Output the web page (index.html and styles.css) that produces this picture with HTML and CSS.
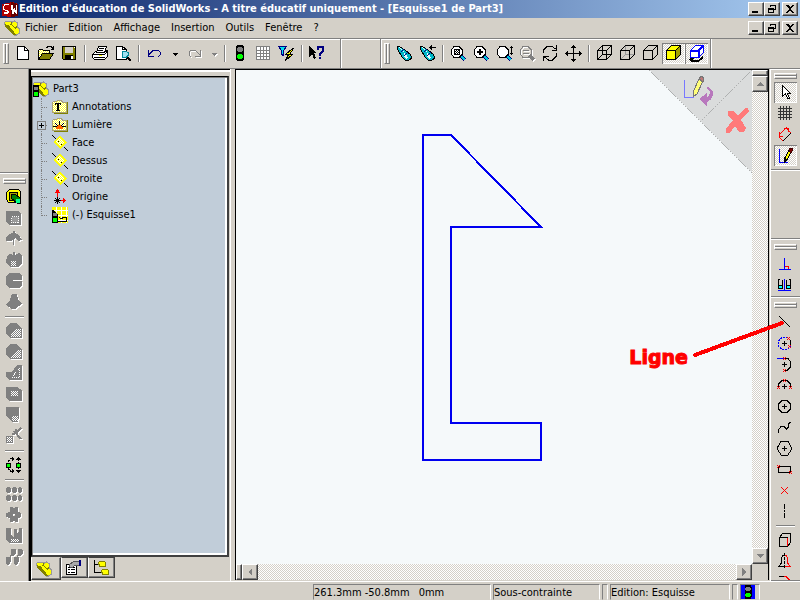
FILE: index.html
```html
<!DOCTYPE html>
<html lang="fr">
<head>
<meta charset="utf-8">
<title>Edition d'éducation de SolidWorks</title>
<link rel="stylesheet" href="styles.css">
</head>
<body>
<svg class="defs" aria-hidden="true">
<defs>
<pattern id="dots-y" width="2" height="2" patternUnits="userSpaceOnUse"><rect width="2" height="2" fill="#ffff30"/><rect width="1" height="1" fill="#fff"/><rect x="1" y="1" width="1" height="1" fill="#fff"/></pattern>
<pattern id="dots-g" width="2" height="2" patternUnits="userSpaceOnUse"><rect width="2" height="2" fill="#808080"/><rect width="1" height="1" fill="#fff"/><rect x="1" y="1" width="1" height="1" fill="#fff"/></pattern>
<symbol id="part" viewBox="0 0 16 16"><path d="M1 5V3l2-2h4l1 1 1-1h2l3 2v4l2 1v5l-3 2h-3L1 7z" fill="#808000"/><path d="M1 2l2-1h3l1 2-2 2H2zM8 2l2-1 3 2v3l-3 1-2-2zM10 9l3-1 3 2v3l-3 2-3-2zM4 4l4 1 3 4v4L6 7z" fill="#ffff00"/><path d="M.5 5V2.500l2-1.500h4l2 1 2-1 3 2v4l2 2v4l-3 2h-3" fill="none" stroke="#999"/></symbol>
<symbol id="light" viewBox="0 0 16 16"><path d="M5 0h6l1 2v12l-1 2H5l-1-2V2z" fill="#000"/><path d="M6 2h4v1h1v3h-1v1H6V6H5V3h1z" fill="#808080"/><path d="M6 9h4v1h1v3h-1v1H6v-1H5v-3h1z" fill="#0f0"/></symbol>
<symbol id="drop" viewBox="0 0 16 16"><path d="M6 8h5v1h-1v1H9v1H8v-1H7V9H6z" fill="currentColor"/></symbol>
<symbol id="lens" viewBox="0 0 20 20"><path d="M13 13l4 4" stroke="#000080" stroke-width="4"/><path d="M13 13l4 4" stroke="#00c8d8" stroke-width="2"/><path d="M6 3.500h5l3.500 3.500v4L11 14.500H6L3.500 11V7z" fill="#fff" stroke="#000"/></symbol>
<symbol id="scope" viewBox="0 0 20 20"><path d="M3.500 3.500h2l6 4 5 4 1 3-1 2-3 1h-2l-3-3-5-8z" fill="#00b8c8" stroke="#000"/><path d="M4 4h1l5 4-1 1zM10 10l2 1 2 4-2 1-2-3z" fill="#e8ffff"/><path d="M7 9l3-3M10 13l4-4" stroke="#000080"/></symbol>
<symbol id="cube" viewBox="0 0 20 20"><path d="M3.500 7.500h9v9h-9zM3.500 7.500l5-5h9l-5 5M17.500 2.500v9l-5 5" fill="none" stroke="currentColor"/></symbol>
<symbol id="plane" viewBox="0 0 16 16"><path d="M8 1l7 6-7 7-7-7z" fill="#ff0"/><path d="M8 3l4 4-4 5-5-5z" fill="url(#dots-y)"/><path d="M0 0l4 4M12 12l4 4M6 6l1 1M9 9l1 1" stroke="#000"/></symbol>
<symbol id="folder" viewBox="0 0 16 16"><path d="M.5 13.500v-10l1-1h3l1-1h4l1 2h4v10z" fill="url(#dots-y)" stroke="#aaa27a"/><path d="M15.500 3v11.500H2" fill="none" stroke="#808000"/></symbol>
<symbol id="min" viewBox="0 0 12 10"><path d="M2 7h6v2H2z"/></symbol>
<symbol id="restore" viewBox="0 0 12 10"><path d="M4.500 3V1.500h5v4H8M4 1h6M2.500 4.500h5v4h-5zM2 4.500h6" fill="none" stroke="#000"/><path d="M4 1h6v1H4zM2 4h6v2H2z"/></symbol>
<symbol id="close" viewBox="0 0 12 10"><path d="M2 1h2l2 2 2-2h2L7 5l3 4H8L6 6 4 9H2l3-4z"/></symbol>
</defs>
</svg>
<div class="app">
<header class="title-bar">
<svg class="i16" aria-hidden="true" viewBox="0 0 16 16"><path d="M0 3l10-2 6 2v12l-6 1-10-1z" fill="#b00000"/><path d="M9 1l7 2v12l-7 1z" fill="#600"/><path d="M7 4H3v1H2v3h1v1h3v1h1v2H6v1H2v-2h3v-1H3V9H1V5h1V3h5zM9 4h2v6l1-3h1l1 3V4h1v9h-1l-1-3-1 3h-2z" fill="#fff"/></svg>
<h1>Edition d'éducation de SolidWorks - A titre éducatif uniquement - [Esquisse1 de Part3]</h1>
<div class="window-buttons"><button aria-label="Réduire"><svg><use href="#min"/></svg></button><button aria-label="Restaurer"><svg><use href="#restore"/></svg></button><button aria-label="Fermer"><svg><use href="#close"/></svg></button></div>
</header>
<nav class="menu-bar">
<svg class="i16" aria-hidden="true"><use href="#part"/></svg>
<button>Fichier</button><button>Edition</button><button>Affichage</button><button>Insertion</button><button>Outils</button><button>Fenêtre</button><button>?</button>
<div class="window-buttons"><button aria-label="Réduire le document"><svg><use href="#min"/></svg></button><button aria-label="Restaurer le document"><svg><use href="#restore"/></svg></button><button aria-label="Fermer le document"><svg><use href="#close"/></svg></button></div>
</nav>

<div class="toolbar">
<div class="band band-main"><i class="grip"></i>
<button class="tool" aria-label="Nouveau"><svg viewBox="0 0 20 20"><path d="M4.500 3.500h7l4 4v9h-11z" fill="#fff" stroke="#000"/><path d="M11.500 3.500v4h4" fill="none" stroke="#000"/></svg></button>
<button class="tool" aria-label="Ouvrir"><svg viewBox="0 0 20 20"><path d="M2.500 16.500v-9l1-1h3l1 1h6v3" fill="url(#dots-y)" stroke="#000"/><path d="M2.500 16.500l4-6h11l-4 6z" fill="#808000" stroke="#000"/><path d="M10 4.500h1l1-1h3l2 2M17.500 3v4M15 6.500h3" fill="none" stroke="#000"/></svg></button>
<button class="tool" aria-label="Enregistrer"><svg viewBox="0 0 20 20"><path d="M3.500 3.500h13v13h-12l-1-1z" fill="#808000" stroke="#000"/><path d="M6 4h8v6H6z" fill="#d4d0c8"/><path d="M6 12h8v5H6z" fill="#000"/><path d="M12 13h2v3h-2zM15 4h1v1h-1z" fill="#fff"/></svg></button>
<i class="sep"></i>
<button class="tool" aria-label="Imprimer"><svg viewBox="0 0 20 20"><path d="M2.500 11.500l3-3h10l2-1v6l-3 3h-10l-2-2z" fill="#fff" stroke="#000"/><path d="M6.500 9.500l2-6h8l-2 6z" fill="#fff" stroke="#000"/><path d="M9 5.500h5M8 7.500h5M3 11.500h12M4 14.500h11M15 11l2-2" stroke="#000"/><path d="M9 12h3v1H9z" fill="#ff0"/></svg></button>
<button class="tool" aria-label="Aperçu"><svg viewBox="0 0 20 20"><path d="M3.500 3.500h6l4 3v10h-10z" fill="#fff" stroke="#000"/><path d="M9.500 3.500v3h4" fill="none" stroke="#000"/><path d="M14 14l4 4" stroke="#000" stroke-width="2"/><path d="M10 8.500h3l2 1v3l-2 2h-3l-1-2v-3z" fill="#a0e0f0" stroke="#00889a"/></svg></button>
<i class="sep"></i>
<button class="tool" aria-label="Annuler"><svg viewBox="0 0 20 20" fill="none" stroke="#000080"><path d="M4.500 7v6H10M5 12l5-5h4l2 2v3l-2 2M5 11l4-4"/></svg></button>
<button class="tool tool-drop" aria-label="Liste d'annulation"><svg class="i16"><use href="#drop"/></svg></button>
<button class="tool off" aria-label="Rétablir"><svg viewBox="0 0 20 20" fill="none" stroke="#808080"><path d="M17.500 7v6H12M17 12l-5-5H8L6 9v3l2 2"/></svg></button>
<button class="tool tool-drop off" aria-label="Liste de rétablissement"><svg class="i16"><use href="#drop"/></svg></button>
<i class="sep"></i>
<button class="tool tool-small" aria-label="Reconstruire"><svg class="i16"><use href="#light"/></svg></button>
<button class="tool" aria-label="Grille"><svg viewBox="0 0 20 20"><path d="M3 3h14v14H3z" fill="#fff"/><path d="M3.500 3v14M7.500 3v14M10.500 3v14M13.500 3v14M16.500 3v14M3 3.500h14M3 7.500h14M3 10.500h14M3 13.500h14M3 16.500h14" stroke="#808080"/></svg></button>
<button class="tool" aria-label="Filtres de sélection"><svg viewBox="0 0 20 20"><path d="M2.500 3.500h8l-3 4v5l-2-1v-4z" fill="#00e0f0" stroke="#000080"/><path d="M16.500 5.500l-7 6h3l-3 6 7-6h-3l4-6z" fill="#ff0" stroke="#000"/></svg></button>
<i class="sep"></i>
<button class="tool" aria-label="Aide contextuelle"><svg viewBox="0 0 20 20"><path d="M2 3l8 7H7l2 5-2 1-2-5-3 3z" fill="#000"/><path d="M11 7V4h5v4l-3 3v2M13 14v2" fill="none" stroke="#000080" stroke-width="2"/></svg></button>
</div>
<div class="band band-empty"></div>
<div class="band band-view"><i class="grip"></i>
<button class="tool" aria-label="Orientation de vue"><svg><use href="#scope"/></svg></button>
<button class="tool" aria-label="Vue précédente"><svg viewBox="0 0 20 20"><use href="#scope"/><path d="M12 4.500h7M14.500 2v5M13.500 3v3" stroke="#000"/></svg></button>
<i class="sep"></i>
<button class="tool" aria-label="Zoom au mieux"><svg viewBox="0 0 20 20"><use href="#lens"/><path d="M6 6h6v6H6z" fill="#000"/><path d="M7 7h1v1H7zM9 7h1v1H9zM8 8h1v1H8zM10 8h1v1h-1zM7 9h1v1H7zM9 9h1v1H9zM8 10h1v1H8zM10 10h1v1h-1z" fill="#fff"/></svg></button>
<button class="tool" aria-label="Zoom fenêtre"><svg viewBox="0 0 20 20"><use href="#lens"/><path d="M6 9h6M9 6v6" stroke="#000" stroke-width="2"/></svg></button>
<button class="tool" aria-label="Zoom avant/arrière"><svg viewBox="0 0 20 20"><use href="#lens"/><path d="M17.500 3v9M16 4.500h3M16 10.500h3" stroke="#000"/></svg></button>
<button class="tool off" aria-label="Zoom sur la sélection"><svg viewBox="0 0 20 20"><path d="M6 3.500h5l3.500 3.500v4L11 14.500H6L3.500 11V7zM6 7.500h6M6 10.500h6" fill="none" stroke="#808080"/><path d="M13 13l4 4" stroke="#808080" stroke-width="3"/></svg></button>
<button class="tool" aria-label="Rotation"><svg viewBox="0 0 20 20" fill="none" stroke="#000"><path d="M3.500 10V7l4-4h4l4 3M16.500 2v5h-5M16.500 10v3l-4 4h-4l-4-3M3.500 18v-5h5"/></svg></button>
<button class="tool" aria-label="Translation"><svg viewBox="0 0 20 20"><path d="M10.500 3v15M3 10.500h15" stroke="#000"/><path d="M10 2h1l2 3H8zM10 19h1l2-3H8zM2 10v1l3 2V8zM19 10v1l-3 2V8z"/></svg></button>
<i class="sep"></i>
<button class="tool" aria-label="Image filaire"><svg viewBox="0 0 20 20"><use href="#cube"/><path d="M8.500 3v8.500H17M8 12l-4 4" fill="none" stroke="#000"/></svg></button>
<button class="tool" aria-label="Lignes cachées en gris"><svg viewBox="0 0 20 20"><path d="M8.500 3v8.500H17M8 12l-4 4" fill="none" stroke="#999"/><use href="#cube"/></svg></button>
<button class="tool" aria-label="Lignes cachées supprimées"><svg><use href="#cube"/></svg></button>
<button class="tool pressed" aria-label="Image ombrée"><svg viewBox="0 0 20 20"><path d="M3 7l5-5h9v10l-5 5H3z" fill="#ff0"/><path d="M12 8l5-5v9l-5 5z" fill="#a0a000"/><use href="#cube"/></svg></button>
<button class="tool pressed" aria-label="Ombres"><svg viewBox="0 0 20 20"><path d="M4 15h4l-2 2h6l5-4v3l-5 3H6l-3-2z" fill="#000"/><path d="M4.500 7.500l5-5h8v7l-5 5h-8z" fill="#fff" stroke="#00f"/><path d="M4.500 7.500h8v7M12.500 7.500l5-5" fill="none" stroke="#00f" stroke-width="2"/></svg></button>
</div>
</div>

<main class="workspace">
<aside class="features">
<div class="dock-blank"></div>
<div class="dock">
<i class="grip-h"></i>
<button class="side" aria-label="Base/Bossage"><svg viewBox="0 0 20 20"><path d="M2.500 5.500l3-3h9l2 2v9l-3 2h-9l-2-3z" fill="#ff0" stroke="#000"/><path d="M5.500 5.500h8v8h-8z" fill="#aaa200" stroke="#000"/><path d="M7 7h4l5 4v5h-3L7 11z" fill="#008000" stroke="#000"/><path d="M12 12h4v4h-4z" fill="#0f8"/></svg></button>
<button class="side off" aria-label="Enlèvement de matière"><svg viewBox="0 0 20 20" fill="#808080"><path d="M2 3h12l3 3v11H6l-4-3z"/><path d="M7.500 8.500h7v6h-7z" fill="#999" stroke="#fff" stroke-dasharray="1 1"/></svg></button>
<button class="side off" aria-label="Révolution"><svg viewBox="0 0 20 20" fill="#808080"><path d="M2 9l3-4 4-1V2h2v2l4 2 3 5-4 1-3-3-1 1v6H9v-5l-3 1H2z"/></svg></button>
<button class="side off" aria-label="Enlèvement par révolution"><svg viewBox="0 0 20 20" fill="#808080"><path d="M3 6l3-2 3 1V2h2v3l4-2 3 3v7l-4 4H6l-4-4z"/><path d="M7 11h5v5H7z" fill="url(#dots-g)"/></svg></button>
<button class="side off" aria-label="Balayage"><svg viewBox="0 0 20 20" fill="#808080"><path d="M5 2h10l3 3v4H9v1h9v4l-3 3H5l-3-4V5z"/></svg></button>
<button class="side off" aria-label="Lissage"><svg viewBox="0 0 20 20" fill="#808080"><path d="M8 2h5l1 6 4 4-7 5H8l-6-4 4-5z"/></svg></button>
<i class="sep-h"></i>
<button class="side off" aria-label="Congé"><svg viewBox="0 0 20 20" fill="#808080"><path d="M2 6l4-4h6l6 5v10H6l-4-4z"/><path d="M7 16V13l4-5h6v8z" fill="url(#dots-g)"/></svg></button>
<button class="side off" aria-label="Chanfrein"><svg viewBox="0 0 20 20" fill="#808080"><path d="M2 6l4-4h6l6 5v10H6l-4-4z"/><path d="M7 16l6-8h4v8z" fill="url(#dots-g)"/></svg></button>
<button class="side off" aria-label="Nervure"><svg viewBox="0 0 20 20" fill="#808080"><path d="M2 9h6l5-7h5v15H5l-3-3z"/><path d="M7.500 14.500l8-9v9z" fill="none" stroke="#fff" stroke-dasharray="1 1"/></svg></button>
<button class="side off" aria-label="Coque"><svg viewBox="0 0 20 20" fill="#808080"><path d="M2 3h11l5 3v11H5l-3-3z"/><path d="M7 7h7v5H7z" fill="url(#dots-g)"/></svg></button>
<button class="side off" aria-label="Dépouille"><svg viewBox="0 0 20 20" fill="#808080"><path d="M2 2h13v9l-1 6H8L2 11z"/><path d="M8 11h6v5H8z" fill="url(#dots-g)"/></svg></button>
<button class="side off" aria-label="Assistance pour le perçage"><svg viewBox="0 0 20 20"><path d="M2.500 10.500h6v6h-6z" fill="url(#dots-g)" stroke="#808080"/><path d="M10 5l7 8M17 2l-6 6M12 3v3M8 8h3" stroke="#808080" stroke-width="2"/></svg></button>
<i class="sep-h"></i>
<button class="side" aria-label="Répétition"><svg viewBox="0 0 20 20"><path d="M9 3.500H7L4.500 6v8L7 16.500h2M14.500 3v14" fill="none" stroke="#000" stroke-dasharray="3 1"/><path d="M8 2l3 2-3 2zM8 14l3 2-3 2zM14 2h1l2 3h-5zM14 18h1l2-3h-5z"/><path d="M2.500 8.500h4v4h-4zM12.500 8.500h4v4h-4z" fill="#0f0" stroke="#000"/></svg></button>
<i class="sep-h"></i>
<button class="side off" aria-label="Répétition linéaire"><svg viewBox="0 0 20 20" fill="#808080"><path d="M3 3h3v1h1v4H6v1H3V8H2V4h1zM9 3h3v1h1v4h-1v1H9V8H8V4h1zM15 3h2v1h1v4h-1v1h-2V8h-1V4h1zM3 11h3v1h1v4H6v1H3v-1H2v-4h1zM9 11h3v1h1v4h-1v1H9v-1H8v-4h1zM15 11h2v1h1v4h-1v1h-2v-1h-1v-4h1z"/></svg></button>
<button class="side off" aria-label="Répétition circulaire"><svg viewBox="0 0 20 20" fill="#808080"><path d="M6 2h3l1 2 1-2h3v5l3 1v4l-3 1v4h-3l-1-2-1 2H6v-4l-4-1V8l4-1zM9 9v2h2V9z"/></svg></button>
<button class="side off" aria-label="Symétrie"><svg viewBox="0 0 20 20" fill="#808080"><path d="M2 2h5v7l3 2V3h3v4l2-1V2h3v15H6l-4-3z"/><path d="M7 13h8v3H7z" fill="url(#dots-g)"/></svg></button>
<button class="side off" aria-label="Répétition pilotée"><svg viewBox="0 0 20 20" fill="#808080"><path d="M8 2h3v5l-1 1H8L7 7V3zM15 2h2l1 1v4l-1 1h-2l-1-1V3zM3 10h3v5l-1 2H3l-1-2v-4zM11 10h3v5l-1 2h-2l-1-2v-4zM6 10l2-3M13 10l2-3" stroke="#808080"/></svg></button>
</div>
</aside>

<section class="manager">
<div class="tree">
<div class="node"><svg class="i16" viewBox="0 0 16 16"><use href="#part"/><path d="M0 4h6v12H0z"/><path d="M1 6h4v3H1z" fill="#808080"/><path d="M1 11h4v4H1z" fill="#0f0"/></svg>Part3</div>
<ul>
<li class="node"><svg class="i16" viewBox="0 0 16 16"><use href="#folder"/><path d="M3 4h6v2H8V5H7v6h1v1H4v-1h1V5H4v1H3z"/></svg>Annotations</li>
<li class="node"><button class="expander" aria-label="Développer Lumière"></button><svg class="i16" viewBox="0 0 16 16"><use href="#folder"/><path d="M4 12V9h2V8h3v1h2v3z" fill="#f60"/><path d="M3 6l3 3M7.500 4v4M12 6L9 9M1 9.500h4M10 9.500h4" stroke="#000"/></svg>Lumière</li>
<li class="node"><svg class="i16"><use href="#plane"/></svg>Face</li>
<li class="node"><svg class="i16"><use href="#plane"/></svg>Dessus</li>
<li class="node"><svg class="i16"><use href="#plane"/></svg>Droite</li>
<li class="node"><svg class="i16" viewBox="0 0 16 16"><path d="M5.500 11V2M6 11.500h7" stroke="red"/><path d="M3 4h5L6 0H5zM11 9v5l3-2v-1z" fill="red"/><path d="M3 9l5 5M8 9l-5 5M5.500 8v7M2 11.500h7" stroke="#000"/></svg>Origine</li>
<li class="node"><svg class="i16" viewBox="0 0 16 16"><path d="M0 0h16v16H0z" fill="#ff0"/><path d="M4.500 0v16M9.500 0v16M14.500 0v16M0 3.500h16M0 8.500h16M0 13.500h16" stroke="#fff"/><path d="M0 3h1l5 5v8H0z"/><path d="M1 6h4v3H1z" fill="#808080"/><path d="M1 11h4v4H1z" fill="#0f0"/><path d="M6 14.500h8.500V10H12l-3 2-2-2" fill="none" stroke="#000"/></svg>(-) Esquisse1</li>
</ul>
</div>
<div class="tabs">
<button class="tab current" aria-label="Arbre de création"><svg class="i16"><use href="#part"/></svg></button>
<button class="tab" aria-label="Propriétés"><svg class="i16" viewBox="0 0 16 16"><path d="M.5 4.500h10v10H.5z" fill="#fff" stroke="#000"/><path d="M2 7.500h2M5 7.500h4M2 9.500h2M5 9.500h4M2 12.500h2M5 12.500h4" stroke="#000"/><path d="M3 5l5-4h5v4H9L6 8 4 7z" fill="#aaa" stroke="#555"/><path d="M13 0h2v6h-2z" fill="#000080"/></svg></button>
<button class="tab" aria-label="Configurations"><svg class="i16" viewBox="0 0 16 16"><path d="M1.500 0v12.500H9M1 4.500h5" fill="none" stroke="#000"/><path d="M5.500 2.500l1-1h5l1 1v4h-6zM8.500 10.500l1-1h5l1 1v4h-6z" fill="#ff0" stroke="#808000"/></svg></button>
</div>
</section>

<section class="viewport">
<div class="canvas">
<svg class="sketch" viewBox="0 0 310 396" role="img" aria-label="Profil de l'esquisse"><path d="M187 65h28l90 92h-90v196h90v37H187z" fill="none" stroke="#0000f0" stroke-width="2"/></svg>
<svg class="corner" viewBox="0 0 104 104" role="img" aria-label="Quitter ou annuler l'esquisse"><path d="M1 0h103v103z" fill="#dadcdc"/><path d="M1 0l103 103M104 0L53 51" stroke="#aeb0b0" stroke-dasharray="2 1"/><path d="M36.500 10v17H46" fill="none" stroke="#7878ff"/><path d="M51 9l4 2-6 13-4 3v-5z" fill="#ffff78" stroke="#777"/><path d="M51 9l2-3 3 2-1 4z" fill="#bd7878" stroke="#777"/><path d="M59 17c7 1 9 11 0 15v4l-8-7 8-6v4c4-2 4-6 0-9z" fill="#b878bd"/><path d="M80 44v-3h5l5 5 7-8h3l1 3-8 9 5 8-2 4h-5l-4-6-5 7h-4v-4l7-9-5-4z" fill="#ff7a7a"/></svg>
</div>
<div class="scroll-v"><i class="split"></i><button aria-label="Défiler vers le haut"><svg viewBox="0 0 10 10"><path d="M1 7h8L5 3z" fill="#808080"/></svg></button><span></span><button aria-label="Défiler vers le bas"><svg viewBox="0 0 10 10"><path d="M1 3h8L5 7z" fill="#808080"/></svg></button></div>
<div class="scroll-h"><i class="split"></i><button aria-label="Défiler vers la gauche"><svg viewBox="0 0 10 10"><path d="M7 1v8L3 5z" fill="#808080"/></svg></button><span></span><button aria-label="Défiler vers la droite"><svg viewBox="0 0 10 10"><path d="M3 1v8l4-4z" fill="#808080"/></svg></button></div>
</section>

<aside class="sketch-tools">
<div class="dock dock-select"><i class="grip-h"></i>
<button class="side pressed" aria-label="Sélectionner"><svg viewBox="0 0 20 20"><path d="M7.500 3.500v11l3-3 2 5h2l-2-5h3z" fill="#fff" stroke="#000"/></svg></button>
<button class="side" aria-label="Grille"><svg viewBox="0 0 20 20" stroke="#333"><path d="M5.500 3v14M8.500 3v14M11.500 3v14M14.500 3v14M3 5.500h14M3 8.500h14M3 11.500h14M3 14.500h14"/></svg></button>
<button class="side" aria-label="Cotation"><svg viewBox="0 0 20 20" fill="none"><path d="M4 11l8-8M4 8v4h4M9 4h4v4" stroke="red"/><path d="M4 13l4 4M12 5l4 4" stroke="red"/><path d="M8 17l8-8" stroke="#000"/></svg></button>
<button class="side pressed" aria-label="Esquisse"><svg viewBox="0 0 20 20"><path d="M4.500 4v13h8" fill="none" stroke="#00f"/><path d="M14.500 4.500l2 1-4 9-3 2v-3z" fill="#ff0" stroke="#000"/><path d="M14 6l1-3h2v3l-1 2z" fill="#800000" stroke="#400"/><path d="M10 13l2 2-3 3z"/></svg></button>
</div>
<div class="dock-blank"></div>
<div class="dock dock-relations"><i class="grip-h"></i>
<button class="side" aria-label="Ajouter des relations"><svg viewBox="0 0 20 20"><path d="M9.500 4v11M4 15.500h12" stroke="#00f"/><path d="M10 12.500h3V15" fill="none" stroke="red"/></svg></button>
<button class="side" aria-label="Afficher les relations"><svg viewBox="0 0 20 20" fill="none"><path d="M9.500 4v12M3 15.500h13" stroke="#00f"/><path d="M3.500 10.500h4v3h-4zM11.500 10.500h4v3h-4z" fill="#0ff" stroke="#000"/><path d="M5 4.500H3.500V11M7.500 5v6M11.500 5v6M14 4.500h1.500V11" stroke="#000"/></svg></button>
</div>
<div class="dock dock-draw"><i class="grip-h"></i>
<button class="side" aria-label="Ligne"><svg viewBox="0 0 20 20"><path d="M4 4l11 11" stroke="#000"/></svg></button>
<button class="side" aria-label="Arc par son centre"><svg viewBox="0 0 20 20" fill="none"><path d="M13 4.500H7L3.500 8v5L7 16.500h5l4-3" stroke="#00f" stroke-dasharray="2 1"/><path d="M15.500 7v6M7 10.500h5M9.500 8v5" stroke="#000"/><path d="M12 4l3 3M15 4l-3 3M13 12l3 3M16 12l-3 3" stroke="red"/></svg></button>
<button class="side" aria-label="Arc tangent"><svg viewBox="0 0 20 20" fill="none"><path d="M2 4.500h8" stroke="#00f"/><path d="M10 4.500h3L15.500 8v5L12 16.500H9M7 10.500h5M9.500 8v5" stroke="#000"/><path d="M8 3l3 3M11 3L8 6M8 15l3 3M11 15l-3 3" stroke="red"/></svg></button>
<button class="side" aria-label="Arc par 3 points"><svg viewBox="0 0 20 20" fill="none"><path d="M3.500 13V9L7 5.500h5L15.500 9v4M7 11.500h5M9.500 9v5" stroke="#000"/><path d="M2 11l3 3M5 11l-3 3M14 11l3 3M17 11l-3 3M8 4l3 3M11 4L8 7" stroke="red"/></svg></button>
<button class="side" aria-label="Cercle"><svg viewBox="0 0 20 20" fill="none" stroke="#000"><path d="M7 4.500h5L15.500 8v5L12 16.500H7L3.500 13V8zM7 10.500h5M9.500 8v5"/></svg></button>
<button class="side" aria-label="Spline"><svg viewBox="0 0 20 20" fill="none" stroke="#000"><path d="M3.500 16v-3l3-4h2l3 3 2-2v-3l2-2"/></svg></button>
<button class="side" aria-label="Polygone"><svg viewBox="0 0 20 20" fill="none" stroke="#000"><path d="M6 3.500h7l3.500 6v2l-4 6h-6l-4-6v-2zM7 10.500h5M9.500 8v5"/></svg></button>
<button class="side" aria-label="Rectangle"><svg viewBox="0 0 20 20" fill="none"><path d="M3.500 7.500h12v6h-12z" stroke="#000"/><path d="M2 6l3 3M5 6L2 9M14 12l3 3M17 12l-3 3" stroke="red"/></svg></button>
<button class="side" aria-label="Point"><svg viewBox="0 0 20 20"><path d="M6 7l7 7M13 7l-7 7" stroke="red"/></svg></button>
<button class="side" aria-label="Ligne de construction"><svg viewBox="0 0 20 20"><path d="M9.500 3v15" stroke="#000" stroke-dasharray="5 1 2 1"/></svg></button>
<i class="sep-h"></i>
<button class="side" aria-label="Convertir les entités"><svg viewBox="0 0 20 20" fill="none"><path d="M4.500 7.500h8v9h-8zM4.500 7.500l3-4h8v9l-3 4" stroke="#000"/><path d="M12.500 16V7.500" stroke="red"/></svg></button>
<button class="side" aria-label="Symétrie des entités"><svg viewBox="0 0 20 20" fill="none"><path d="M9.500 2v15" stroke="#000" stroke-dasharray="3 1"/><path d="M9 4.500H8L6.500 7v5l-3 3.500H9" stroke="#000"/><path d="M10 4.500h1L12.500 7v5l3 3.500H10" stroke="red"/></svg></button>
<button class="side" aria-label="Congé d'esquisse"><svg viewBox="0 0 20 20" fill="none"><path d="M4 4.500h6" stroke="#000"/><path d="M9 4.500h2l4 4v6" stroke="red"/></svg></button>
</div>
</aside>

<div class="callout"><strong>Ligne</strong><svg viewBox="0 0 94 40" aria-hidden="true"><path d="M3 36l87-32" stroke="red" stroke-width="4" stroke-linecap="round"/></svg></div>
</main>

<footer class="status">
<div class="cell cell-coords"><span>261.3mm -50.8mm</span><span>0mm</span></div>
<div class="cell cell-state">Sous-contrainte</div>
<div class="cell cell-thin"></div>
<div class="cell cell-mode">Edition: Esquisse</div>
<div class="cell cell-thin"></div>
<div class="cell cell-light"><svg viewBox="0 0 14 14"><path d="M0 0h14v14H0z" fill="#00f"/><use href="#light" width="14" height="14"/></svg></div>
</footer>
</div>
</body>
</html>
```
FILE: styles.css
```css
:root {
  --face: #d4d0c8;
  --shade: #808080;
  --dark: #404040;
  --dither: repeating-conic-gradient(#fff 0 25%, #d4d0c8 0 50%) 0 0 / 2px 2px;
}

* { box-sizing: border-box; }

body {
  margin: 0;
  background: var(--face);
  color: #000;
  font: 11px/14px "DejaVu Sans Condensed", "DejaVu Sans", sans-serif;
}

svg { display: block; width: 20px; height: 20px; flex: none; shape-rendering: crispEdges; }
.defs { position: absolute; width: 0; height: 0; }
.i16 { width: 16px; height: 16px; }

button {
  display: flex;
  align-items: center;
  justify-content: center;
  margin: 0;
  padding: 0;
  border: 0;
  background: none;
  color: inherit;
  font: inherit;
}

.app { display: flex; flex-direction: column; height: 100vh; overflow: hidden; }

.title-bar {
  display: flex;
  align-items: center;
  gap: 1px;
  height: 18px;
  padding: 0 2px;
  background: linear-gradient(90deg, #0a246a, #a6caf0);
  color: #fff;
}
.title-bar h1 { margin: 0; font-size: 11px; font-weight: bold; white-space: nowrap; }

.window-buttons { display: flex; margin-left: auto; }
.window-buttons button {
  width: 16px;
  height: 14px;
  border: 1px solid;
  border-color: #fff var(--dark) var(--dark) #fff;
  box-shadow: inset -1px -1px var(--shade);
  background: var(--face);
}
.window-buttons button:last-child { margin-left: 2px; }
.window-buttons svg { width: 12px; height: 10px; }

.menu-bar { display: flex; align-items: center; height: 20px; padding: 0 2px 0 4px; }
.menu-bar > button { padding: 0 6px 0 5px; }

.toolbar {
  display: flex;
  height: 31px;
  border-top: 1px solid var(--shade);
  border-bottom: 1px solid var(--shade);
}
.band { display: flex; align-items: center; padding-left: 3px; border-right: 1px solid var(--shade); box-shadow: inset 0 1px #fff, 1px 0 #fff; }
.band-main { padding-right: 11px; }
.band-empty { width: 40px; }
.band-view { padding-right: 2px; }

.grip { flex: none; width: 6px; height: 21px; margin-right: 3px; border: 1px solid; border-color: #fff var(--shade) var(--shade) #fff; background: linear-gradient(90deg, var(--face) 1px, var(--shade) 1px 2px, #fff 2px 3px, var(--face) 3px); }
.grip-h { flex: none; width: 23px; height: 6px; margin: 4px 0; border: 1px solid; border-color: #fff var(--shade) var(--shade) #fff; background: linear-gradient(var(--face) 1px, var(--shade) 1px 2px, #fff 2px 3px, var(--face) 3px); }
.sep { flex: none; width: 2px; height: 17px; margin: 0 3px; border-left: 1px solid var(--shade); background: #fff; }
.sep-h { flex: none; width: 19px; height: 2px; margin: 3px 0; border-top: 1px solid var(--shade); background: #fff; }

.tool, .side { flex: none; width: 23px; height: 21px; align-items: flex-start; justify-content: flex-start; padding-left: 1px; }
.tool-drop, .tool-small { padding-top: 2px; }
.tool-drop { width: 16px; }
.tool-small { padding-left: 3px; }
.off { color: var(--shade); }
.off svg { filter: drop-shadow(1px 1px 0 #fff); }
.pressed { box-shadow: inset 1px 1px var(--shade), inset -1px -1px #fff; background: var(--dither); }

.workspace { position: relative; display: flex; flex: 1; min-height: 0; }

.dock { display: flex; flex-direction: column; align-items: center; border-top: 1px solid #fff; }

.features { display: flex; flex-direction: column; width: 29px; border-right: 1px solid var(--shade); overflow: hidden; }
.features .dock-blank { height: 104px; flex: none; border-bottom: 1px solid var(--shade); }
.features .grip-h { margin-bottom: 3px; }
.features .dock { align-items: flex-start; padding-left: 3px; }
.features .sep-h { margin-left: 2px; }

.manager { display: flex; flex-direction: column; width: 202px; border-left: 2px solid #000; border-right: 1px solid #fff; box-shadow: inset 0 1px #000, inset 0 3px #fff; padding-top: 7px; }
.tree {
  flex: 1;
  margin-right: 1px;
  padding: 3px 0 0 1px;
  border: 1px solid #000;
  border-right: 2px solid var(--dark);
  border-bottom: 2px solid var(--dark);
  box-shadow: inset 1px 1px var(--shade), inset -2px -2px #fff;
  background: #c1cdd9;
}
.tree ul { margin: 0 0 0 8px; padding: 0; list-style: none; }
.node { position: relative; display: flex; align-items: center; gap: 4px; height: 18px; }
li.node::before { content: ""; width: 6px; height: 18px; border-left: 1px dotted var(--shade); background: repeating-linear-gradient(90deg, var(--shade) 0 1px, transparent 1px 2px) 0 9px / 100% 1px no-repeat; }
li.node:last-child::before { height: 10px; align-self: flex-start; }
.expander { position: absolute; left: -4px; top: 5px; width: 9px; height: 9px; border: 1px solid var(--shade); background: linear-gradient(#000, #000) center / 5px 1px no-repeat, linear-gradient(#000, #000) center / 1px 5px no-repeat, #c1cdd9; }

.tabs { display: flex; align-items: flex-start; height: 24px; }
.tab { width: 27px; height: 21px; padding: 2px 0 0 4px; align-items: flex-start; justify-content: flex-start; border: 1px solid; border-color: var(--dark) var(--dark) var(--dark) #fff; box-shadow: inset -1px -1px var(--shade); }
.tab.current { width: 30px; height: 23px; padding-top: 3px; border-top-color: var(--face); }

.viewport {
  display: grid;
  flex: 1;
  min-width: 0;
  grid-template: 1fr 16px / 1fr 16px;
  margin: 0 1px 1px 4px;
  border-top: 1px solid #000;
  border-left: 1px solid #000;
  border-right: 1px solid #000;
}
.canvas { position: relative; overflow: hidden; background: #f5f9fa; }
.sketch { width: 310px; height: 396px; }
.corner { position: absolute; top: 0; right: 0; width: 104px; height: 104px; }

.scroll-v, .scroll-h { display: flex; background: var(--dither); }
.scroll-v { flex-direction: column; }
.scroll-v span, .scroll-h span { flex: 1; }
.scroll-v button, .scroll-h button, .split {
  width: 16px;
  height: 16px;
  border: 1px solid;
  border-color: #fff var(--dark) var(--dark) #fff;
  box-shadow: inset -1px -1px var(--shade);
  background: var(--face);
}
.scroll-v svg, .scroll-h svg { width: 10px; height: 10px; }
.scroll-v .split { height: 6px; }
.scroll-h .split { width: 6px; }

.sketch-tools { display: flex; flex-direction: column; width: 30px; border-left: 1px solid #fff; overflow: hidden; }
.sketch-tools .dock { align-items: flex-start; padding-left: 3px; border-bottom: 1px solid var(--shade); }
.sketch-tools .sep-h { margin-left: 2px; }
.sketch-tools .dock-blank { height: 69px; flex: none; border-top: 1px solid #fff; border-bottom: 1px solid var(--shade); }
.sketch-tools .dock-select { flex: none; padding-bottom: 3px; }
.dock-select .grip-h { margin: 3px 0; }
.dock-relations { flex: none; }
.dock-draw { flex: 1; min-height: 0; overflow: hidden; }

.callout { position: absolute; top: 250px; right: 14px; display: flex; align-items: flex-end; }
.callout strong { margin: 0 4px -10px 0; color: red; font: bold 19px/24px "DejaVu Sans", sans-serif; -webkit-text-stroke: 1px red; }
.callout svg { width: 94px; height: 40px; }

.status { display: flex; justify-content: flex-end; gap: 2px; height: 19px; padding: 2px 40px 0 0; border-top: 1px solid #fff; line-height: 16px; white-space: nowrap; }
.cell { border: 1px solid; border-color: var(--shade) #fff var(--face) var(--shade); }
.cell-coords { display: flex; gap: 9px; width: 178px; }
.cell-state { width: 107px; }
.cell-thin { width: 6px; }
.cell-mode { width: 120px; }
.cell-light { width: 20px; }
.cell-light svg { width: 14px; height: 14px; }
```
